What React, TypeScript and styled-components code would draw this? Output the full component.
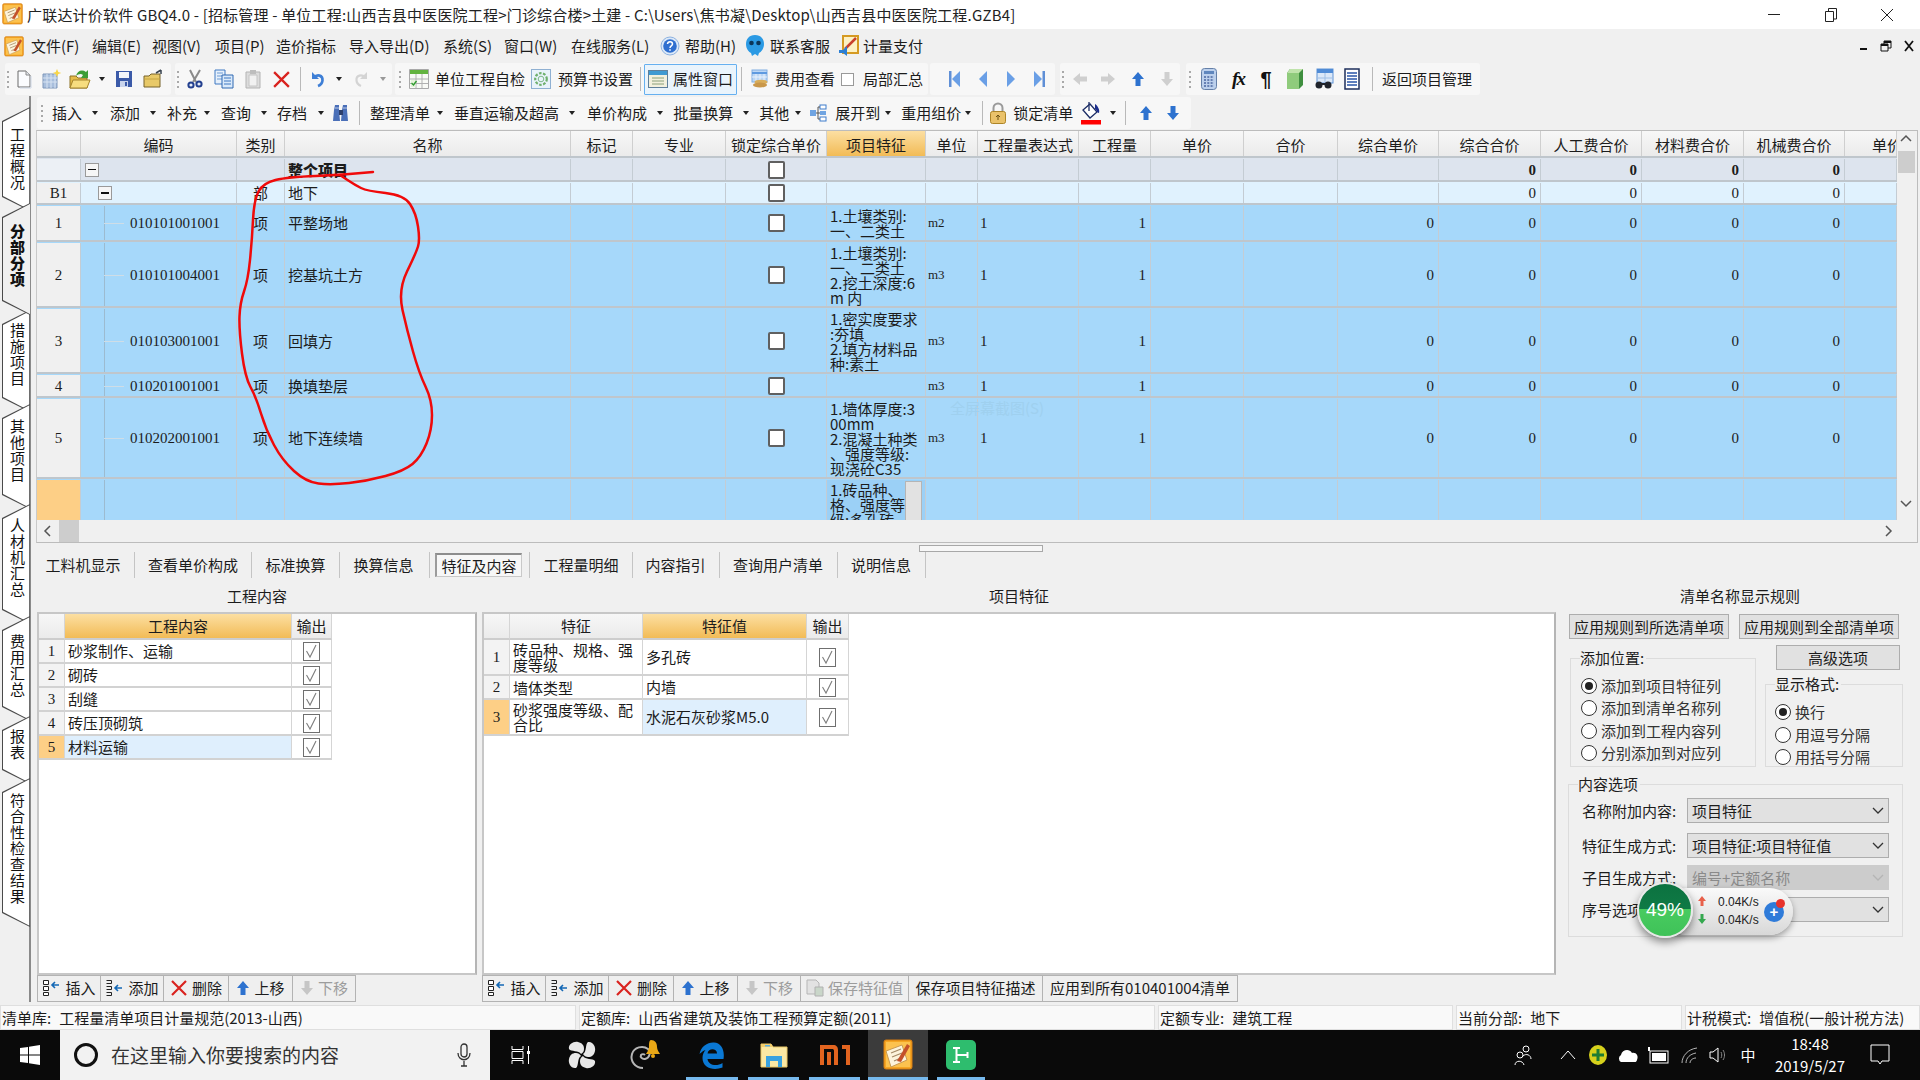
import React from 'react';
import styled, { createGlobalStyle } from 'styled-components';

const CJK = '"Noto Sans CJK SC", "Noto Sans", sans-serif';
const DIGIT = '"Liberation Serif", "Noto Sans CJK SC", serif';

const Global = createGlobalStyle`
  html, body { margin: 0; padding: 0; width: 1920px; height: 1080px; overflow: hidden; background: #f0f0f0; }
  * { box-sizing: border-box; }
`;

const Page = styled.div`
  position: relative; width: 1920px; height: 1080px; overflow: hidden; background: #f0f0f0;
  display: flex; flex-direction: column; font: 15px/18px ${CJK}; color: #1c1c1c;
`;

/* ---------- title + menu ---------- */
const TitleBar = styled.div`
  height: 29px; background: #fff; display: flex; align-items: center; padding-left: 2px; flex: none;
`;
const TitleText = styled.div`margin-left: 4px; white-space: nowrap; flex: 1; color: #222; letter-spacing: 0.19px;`;
const WinButtons = styled.div`display: flex; width: 170px; flex: none; margin-right: 4px;`;
const WinButton = styled.div`width: 56.6px; display: flex; justify-content: center; align-items: center;`;

const MenuBar = styled.div`height: 34px; flex: none; display: flex; align-items: center; padding-left: 4px;`;
const MenuItem = styled.div<{ $w: number; $gap?: number }>`
  width: ${p => p.$w}px; flex: none; white-space: nowrap; display: flex; align-items: center; gap: ${p => p.$gap ?? 0}px;
`;
const MdiButtons = styled.div`margin-left: auto; display: flex; align-items: center; gap: 11px; padding-right: 5px;`;

/* ---------- toolbars ---------- */
const ToolRow = styled.div`height: 33px; flex: none; display: flex; padding-left: 5px;`;
const ToolGroup = styled.div<{ $w: number; $ml?: number }>`
  width: ${p => p.$w}px; margin-left: ${p => p.$ml ?? 0}px; flex: none; height: 32px; background: #f7f7f7; border-radius: 3px;
  display: flex; align-items: center;
`;
const Slot = styled.div<{ $w?: number; $ml?: number; $muted?: boolean }>`
  ${p => (p.$w ? `width:${p.$w}px;` : '')} margin-left: ${p => p.$ml ?? 0}px; flex: none; white-space: nowrap;
  display: flex; justify-content: center; align-items: center; color: ${p => (p.$muted ? '#9a9a9a' : 'inherit')};
`;
const ActiveTool = styled(Slot)`
  height: 31px; border: 1px solid #66b0f0; background: #eaf4fc; gap: 5px; border-radius: 1px;
`;
const Grip = styled.div<{ $w: number }>`
  width: ${p => p.$w}px; flex: none; height: 17px; display: flex; justify-content: center;
  &::before { content: ''; width: 2px; height: 100%; background: repeating-linear-gradient(#a9a9a9 0 2px, transparent 2px 5px); }
`;
const Sep = styled.div<{ $w: number; $ml?: number }>`
  width: ${p => p.$w}px; margin-left: ${p => p.$ml ?? 0}px; flex: none; height: 24px; display: flex; justify-content: center;
  &::before { content: ''; width: 1px; height: 100%; background: #b9b9b9; }
`;
const Caret = styled.div<{ $w?: number; $ml?: number; $muted?: boolean }>`
  ${p => (p.$w ? `width:${p.$w}px;` : 'width:7px;')} margin-left: ${p => p.$ml ?? 0}px; flex: none; display: flex; justify-content: center;
  &::before { content: ''; border-left: 3.5px solid transparent; border-right: 3.5px solid transparent;
    border-top: 4px solid ${p => (p.$muted ? '#999' : '#222')}; }
`;
const MiniCheck = styled.div`width: 13px; height: 13px; border: 1px solid #999; background: #fff;`;
const FxGlyph = styled.span`font: italic 700 19px/20px "Liberation Serif", serif; color: #111; letter-spacing: -2px;`;
const PilcrowGlyph = styled.span`font: 700 20px/20px "Liberation Sans", sans-serif; color: #111;`;

/* ---------- body ---------- */
const Body = styled.div`flex: 1; display: flex; min-height: 0;`;
const SideRail = styled.div`
  width: 36px; flex: none; padding-top: 11px; display: flex; flex-direction: column;
  background: linear-gradient(to right, #f0f0f0 29px, #8a8a8a 29px, #8a8a8a 31px, #f0f0f0 31px);
`;
const SideTab = styled.div<{ $h: number; $mt: number; $pb: number; $active?: boolean }>`
  height: ${p => p.$h}px; margin-top: ${p => p.$mt}px; width: 31px; flex: none; position: relative;
  display: flex; align-items: center; justify-content: center; padding: 0 0 ${p => p.$pb}px 3px;
  clip-path: polygon(2px 14px, 30px 0, 30px 100%, 2px calc(100% - 14px)); background: #4a4a4a;
  z-index: ${p => (p.$active ? 2 : 1)};
  &::before { content: ''; position: absolute; inset: 0; background: ${p => (p.$active ? '#f0f0f0' : '#fff')};
    clip-path: polygon(3px 15px, 29px 1.6px, ${p => (p.$active ? '31px 0, 31px 100%' : '29.2px 1.6px, 29.2px calc(100% - 1.6px)')}, 29px calc(100% - 1.6px), 3px calc(100% - 15px)); }
`;
const SideTabText = styled.span<{ $active?: boolean }>`
  position: relative; writing-mode: vertical-rl; text-orientation: upright; font-size: 15px; line-height: 16px;
  letter-spacing: 1px; font-weight: ${p => (p.$active ? 900 : 400)}; color: #111;
`;

const Content = styled.div`flex: 1; display: flex; flex-direction: column; min-width: 0;`;
const SecondRow = styled.div`height: 34px; flex: none; display: flex; padding-top: 1px;`;
const SecondGroup = styled.div`
  width: 1154px; margin-left: 1px; height: 32px; background: #f7f7f7; border-radius: 3px; display: flex; align-items: center;
`;

const TableFrame = styled.div`
  height: 413px; flex: none; width: 1882px; border: 1px solid #bcbcbc; border-left-color: #c9c9c9; display: flex; flex-wrap: wrap; align-content: flex-start;
`;
const TableBody = styled.div`width: 1860px; height: 389px; overflow: hidden; flex: none;`;
const COLS = '44px 156px 48px 286px 62px 93px 101px 99px 52px 101px 72px 93px 94px 101px 102px 101px 102px 101px 52px';
const GridRow = styled.div<{ $h: number; $bg: string; $head?: boolean }>`
  display: grid; grid-template-columns: ${COLS}; height: ${p => p.$h}px; background: ${p => p.$bg};
  border-bottom: 2px solid #bfc6cc; overflow: hidden; padding-top: ${p => (p.$head ? 0 : 1)}px;
`;
const HeadCell = styled.div<{ $gold?: boolean; $cut?: boolean }>`
  display: flex; align-items: center; justify-content: ${p => (p.$cut ? 'flex-start' : 'center')}; white-space: nowrap; overflow: hidden;
  border-right: 1px solid #cfcfcf; padding: 2px 0 0 ${p => (p.$cut ? 27 : 0)}px;
  background: ${p => (p.$gold ? 'linear-gradient(#fcdfa2, #f2bb56)' : 'linear-gradient(#f7f7f7, #ebebeb)')};
`;
const Cell = styled.div<{ $align?: string; $bold?: boolean; $pad?: number; $digit?: boolean; $bg?: string }>`
  position: relative; display: flex; align-items: center; white-space: nowrap; overflow: hidden;
  border-right: 1px solid #c4ccd3; justify-content: ${p => p.$align ?? 'flex-start'};
  padding: 0 ${p => p.$pad ?? 4}px; font-weight: ${p => (p.$bold ? 900 : 400)};
  ${p => (p.$digit ? `font-family:${DIGIT};` : '')} ${p => (p.$bg ? `background:${p.$bg};` : '')}
`;
const TreeCell = styled(Cell)<{ $line?: boolean; $stub?: boolean }>`
  padding-left: 49px; font-family: ${DIGIT};
  ${p => (p.$line ? `&::before { content:''; position:absolute; left:23px; top:-2px; bottom:-2px; width:1px; background:#9cbbd0; }` : '')}
  ${p => (p.$stub ? `&::after { content:''; position:absolute; left:23px; width:20px; top:50%; height:1px; background:#cfdde6; }` : '')}
`;
const TreeBox = styled.div<{ $ml: number }>`
  width: 14px; height: 14px; margin-left: ${p => p.$ml}px; border: 1px solid #9a9a9a; background: #f6f6f6; flex: none;
  display: flex; align-items: center; justify-content: center;
  &::before { content: ''; width: 8px; height: 1.5px; background: #111; }
`;
const FeatureCell = styled(Cell)<{ $top?: boolean }>`
  white-space: pre-line; line-height: 15px; padding: ${p => (p.$top ? 2 : 0)}px 0 0 3px; align-items: ${p => (p.$top ? 'flex-start' : 'center')};
`;
const SmallUnit = styled.span`font-size: 13px; font-family: ${DIGIT};`;
const CellScroll = styled.div`
  position: absolute; right: 3px; top: 1px; bottom: -10px; width: 17px; background: #e2e2e2; border: 1px solid #b5b5b5;
`;
const Box = styled.div`width: 17px; height: 18px; border: 2px solid #606060; border-radius: 2px; background: #fff; flex: none;`;
const VScroll = styled.div`
  width: 18px; height: 389px; flex: none; background: #f0f0f0; display: flex; flex-direction: column; align-items: center; padding-top: 3px;
`;
const VThumb = styled.div`width: 17px; height: 22px; background: #cdcdcd; margin-top: 8px;`;
const HScroll = styled.div`width: 100%; height: 22px; flex: none; display: flex; align-items: center; padding-left: 6px;`;
const HThumb = styled.div`width: 20px; height: 100%; background: #cdcdcd; margin-left: 7px;`;
const Arrow = styled.div<{ $mt?: number; $ml?: number }>`
  margin-top: ${p => p.$mt ?? 0}px; margin-left: ${p => p.$ml ?? 0}px; display: flex;
`;
const Splitter = styled.div`
  height: 9px; flex: none; display: flex; justify-content: center; padding: 2px 0 0 0; width: 1882px;
  &::before { content: ''; width: 122px; height: 5px; background: #f7f7f7; border: 1px solid #a8a8a8; margin-left: 7px; }
`;
const TabStrip = styled.div`height: 26px; flex: none; display: flex; align-items: center; padding-left: 2px;`;
const BottomTab = styled.div<{ $w: number; $active?: boolean }>`
  width: ${p => p.$w}px; flex: none; height: ${p => (p.$active ? 24 : 26)}px; display: flex; align-items: center; justify-content: center; white-space: nowrap;
  ${p => (p.$active ? 'background:#f7f7f7;border:1px solid #c9c9c9;border-top:2px solid #8d8d8d;border-left:2px solid #9b9b9b;' : '')}
`;
const TabSep = styled.div<{ $w: number }>`
  width: ${p => p.$w}px; flex: none; height: 26px; display: flex; justify-content: center;
  &::before { content: ''; width: 1px; height: 100%; background: #c4c4c4; }
`;

const Lower = styled.div`flex: 1; display: flex; min-height: 0;`;
const Column = styled.div<{ $w: number; $ml?: number }>`
  width: ${p => p.$w}px; margin-left: ${p => p.$ml ?? 0}px; flex: none; display: flex; flex-direction: column;
`;
const SectionLabel = styled.div<{ $shift?: number }>`
  height: 34px; flex: none; display: flex; align-items: center; justify-content: center; padding: 1px ${p => p.$shift ?? 0}px 0 0;
`;
const Panel = styled.div`
  height: 363px; flex: none; background: #fff; border: 2px solid #c7c7c7; border-right-color: #b5b5b5; padding: 0;
`;
const MiniGrid = styled.div<{ $cols: string }>`
  display: grid; grid-template-columns: ${p => p.$cols}; width: max-content;
`;
const MiniHead = styled.div<{ $gold?: boolean }>`
  height: 26px; display: flex; align-items: center; justify-content: center; border-right: 1px solid #d5d5d5; border-bottom: 2px solid #cdcdcd;
  background: ${p => (p.$gold ? 'linear-gradient(#fcdfa2, #f2bb56)' : 'linear-gradient(#f7f7f7, #ebebeb)')};
`;
const MiniCell = styled.div<{ $h: number; $center?: boolean; $bg?: string; $tight?: boolean }>`
  height: ${p => p.$h}px; display: flex; align-items: center; justify-content: ${p => (p.$center ? 'center' : 'flex-start')};
  padding: 0 ${p => (p.$center ? 0 : 3)}px; border-right: 1px solid #d5d5d5; border-bottom: 2px solid #d2d2d2; background: ${p => p.$bg ?? '#fff'};
  line-height: ${p => (p.$tight ? 15 : 18)}px; white-space: pre-line; overflow: hidden;
`;
const IdxCell = styled(MiniCell)`background: ${p => p.$bg ?? '#f3f3f3'}; font-family: ${DIGIT};`;
const BtnBar = styled.div`height: 27px; margin-top: 0; flex: none; display: flex;`;
const BarButton = styled.div<{ $w: number; $muted?: boolean }>`
  width: ${p => p.$w}px; flex: none; display: flex; align-items: center; justify-content: center; gap: 4px; white-space: nowrap; padding-bottom: 2px;
  border: 1px solid #b3b3b3; border-left-width: 0; background: #efefef; color: ${p => (p.$muted ? '#9c9c9c' : 'inherit')};
  &:first-child { border-left-width: 1px; }
`;

const RulePane = styled.div`flex: 1; padding-left: 12px; display: flex; flex-direction: column;`;
const PlainBtn = styled.div<{ $w: number; $mr?: number }>`
  width: ${p => p.$w}px; height: 25px; margin-right: ${p => p.$mr ?? 0}px; flex: none; display: flex; align-items: center; justify-content: center;
  background: #e1e1e1; border: 1px solid #adadad; white-space: nowrap;
`;
const BtnRow = styled.div`display: flex; gap: 10px; margin: 2px 0 0 1px;`;
const TwoCols = styled.div`display: flex; margin-top: 6px; margin-left: 2px;`;
const LeftBlock = styled.div`width: 195px; flex: none; padding-top: 13px;`;
const RightBlock = styled.div`flex: none; display: flex; flex-direction: column; align-items: flex-end; width: 138px;`;
const GroupBox = styled.div<{ $h: number; $w: number; $mt?: number }>`
  position: relative; width: ${p => p.$w}px; height: ${p => p.$h}px; margin-top: ${p => p.$mt ?? 0}px; flex: none; border: 1px solid #dcdcdc;
`;
const Legend = styled.div`
  position: absolute; left: 9px; top: -10px; background: #f0f0f0; padding: 0 2px 0 0; line-height: 18px; white-space: nowrap;
`;
const RadioStack = styled.div<{ $pt: number; $pl: number; $step: number }>`
  padding: ${p => p.$pt}px 0 0 ${p => p.$pl}px; display: flex; flex-direction: column; gap: ${p => p.$step - 18}px;
`;
const RadioRow = styled.div`display: flex; align-items: center; gap: 4px; height: 18px; white-space: nowrap; color: #333;`;
const Radio = styled.div<{ $on?: boolean }>`
  width: 16px; height: 16px; border-radius: 50%; border: 1px solid #333; background: #fff; flex: none;
  display: flex; align-items: center; justify-content: center;
  &::before { content: ''; width: 8px; height: 8px; border-radius: 50%; background: ${p => (p.$on ? '#222' : 'transparent')}; }
`;
const OptionsBox = styled(GroupBox)`margin-left: 0; padding: 13px 0 0 13px; display: flex; flex-direction: column; gap: 0;`;
const FormRow = styled.div<{ $mb?: number }>`display: flex; align-items: center; height: 25px; margin-bottom: ${p => p.$mb ?? 7}px;`;
const FormLabel = styled.div`width: 105px; flex: none; white-space: nowrap;`;
const FakeSelect = styled.div<{ $off?: boolean }>`
  width: 202px; height: 25px; flex: none; background: ${p => (p.$off ? '#cccccc' : '#e1e1e1')}; color: ${p => (p.$off ? '#8a8a8a' : 'inherit')};
  border: 1px solid ${p => (p.$off ? '#cccccc' : '#adadad')}; display: flex; align-items: center; justify-content: space-between; padding: 0 4px 0 4px; white-space: nowrap;
`;

/* ---------- status + taskbar ---------- */
const StatusBar = styled.div`height: 28px; flex: none; padding-top: 3px; display: flex; gap: 3px; padding-left: 0;`;
const StatusCell = styled.div<{ $w: number }>`
  width: ${p => p.$w}px; height: 25px; flex: none; background: #f9f9f9; border: 1px solid #dfdfdf; display: flex; align-items: center; padding-left: 1px; gap: 8px; white-space: nowrap; overflow: hidden;
`;
const Taskbar = styled.div`height: 50px; flex: none; background: #0a0a0a; display: flex; align-items: stretch; color: #fff;`;
const StartBtn = styled.div`width: 60px; flex: none; display: flex; align-items: center; justify-content: center;`;
const SearchBox = styled.div`
  width: 430px; flex: none; background: #f2f2f2; color: #333; display: flex; align-items: center; padding-left: 13px; font-size: 19px;
`;
const SearchText = styled.span`margin-left: 12px; flex: 1; white-space: nowrap;`;
const MicSlot = styled.div`width: 52px; flex: none; display: flex; justify-content: center;`;
const TaskSlot = styled.div<{ $w: number; $ml?: number; $run?: boolean; $active?: boolean }>`
  width: ${p => p.$w}px; margin-left: ${p => p.$ml ?? 0}px; flex: none; display: flex; align-items: center; justify-content: center;
  ${p => (p.$active ? 'background:#3b3b3b;' : '')}
  ${p => (p.$run ? `box-shadow: inset 0 -3px 0 #76b9ed;` : '')}
`;
const Tray = styled.div<{ $w: number; $ml?: number }>`
  width: ${p => p.$w}px; margin-left: ${p => p.$ml ?? 0}px; flex: none; display: flex; align-items: center; justify-content: center;
`;
const Clock = styled.div`
  width: 90px; margin-left: 5px; flex: none; display: flex; flex-direction: column; align-items: center; justify-content: center; font-size: 15px; line-height: 22px; color: #fff;
`;

/* ---------- overlays ---------- */
const RedInk = styled.svg`position: absolute; left: 0; top: 0; pointer-events: none; z-index: 3;`;
const Ghost = styled.div`position: absolute; left: 950px; top: 399px; color: #9fd0ef; z-index: 2; white-space: nowrap;`;
const Meter = styled.div`
  position: absolute; left: 1637px; top: 882px; width: 160px; height: 56px; z-index: 5;
`;
const MeterPill = styled.div`
  position: absolute; left: 26px; top: 6px; width: 130px; height: 47px; border-radius: 24px;
  background: linear-gradient(#fafafa, #d8d8d8); box-shadow: 0 3px 6px rgba(0,0,0,.35);
`;
const MeterBall = styled.div`
  position: absolute; left: 0; top: 0; width: 56px; height: 56px; border-radius: 50%; border: 2px solid #e8e8e8; color: #fff; font: 19px/52px "Liberation Sans", sans-serif;
  text-align: center; background: linear-gradient(#0c7240 0, #0f7a45 49%, #48cb60 49%, #3fc258 100%); box-shadow: 0 4px 8px rgba(0,0,0,.45);
`;
const MeterRate = styled.div<{ $top: number }>`
  position: absolute; left: 81px; top: ${p => p.$top}px; font: 12px/14px "Liberation Sans", sans-serif; color: #222; white-space: nowrap;
`;
const MeterArrow = styled.div<{ $top: number }>`position: absolute; left: 60px; top: ${p => p.$top}px; display: flex;`;
const MeterPlus = styled.div`
  position: absolute; left: 127px; top: 20px; width: 20px; height: 20px; border-radius: 50%; background: #2f7bd9; color: #fff;
  font: 700 15px/19px "Liberation Sans", sans-serif; text-align: center;
`;
const MeterDot = styled.div`position: absolute; left: 139px; top: 17px; width: 9px; height: 9px; border-radius: 50%; background: #e8332c;`;

/* ---------- icons ---------- */
type P = { s?: number };
const Doc = () => <svg width="18" height="20" viewBox="0 0 18 20"><path d="M3 2h8l4 4v12H3z" fill="#fbfcfe" stroke="#6b6b6b" /><path d="M11 2v4h4" fill="#e2e6ec" stroke="#8a8a8a" /><path d="M16 7v12H5" fill="none" stroke="#cfd8e6" /></svg>;
const NewDoc = () => <svg width="22" height="20" viewBox="0 0 22 20"><path d="M2 5h14v14H2z" fill="#a9bfdd" stroke="#7f97ba" /><path d="M6 5v14M10 5v14M14 5v14M2 9h14M2 13h14" stroke="#d7e3f2" /><path d="M16 0l1.300 3 3 1-3 1-1.300 3-1.300-3-3-1 3-1z" fill="#f8d648" /></svg>;
const OpenF = () => <svg width="24" height="20" viewBox="0 0 24 20"><path d="M2 7h6l2 2h9v10H2z" fill="#e6bc48" stroke="#8d7327" /><path d="M2 19l3-8h17l-3 8z" fill="#f7dd7f" stroke="#a5842c" /><path d="M8 7c1-5 6-7 10-4l2-2v8h-7l2-3c-2-2-5-1-7 1z" fill="#3d9e37" /></svg>;
const Save = () => <svg width="18" height="20" viewBox="0 0 18 20"><path d="M1 2h16v16H1z" fill="#3b5aa8" /><path d="M4 3h10v6H4z" fill="#f4f6fb" /><path d="M5 12h8v6H5z" fill="#c9d4ec" /><path d="M10 13h2v4h-2z" fill="#3b5aa8" /></svg>;
const FolderS = () => <svg width="22" height="20" viewBox="0 0 22 20"><path d="M2 7h5l2-2h9v13H2z" fill="#e8c968" stroke="#77632a" /><path d="M2 10h16" stroke="#c5a442" /><path d="M14 4l5-3M19 1v4" fill="none" stroke="#39434f" strokeWidth="1.500" /></svg>;
const Sciss = () => <svg width="18" height="20" viewBox="0 0 18 20"><path d="M4 1l6 12M14 1L7 13" stroke="#8a8a8a" strokeWidth="2" /><circle cx="5" cy="16" r="2.600" fill="#e6ecf7" stroke="#23408f" strokeWidth="2" /><circle cx="13" cy="15" r="2.600" fill="#e6ecf7" stroke="#23408f" strokeWidth="2" /></svg>;
const CopyI = () => <svg width="20" height="20" viewBox="0 0 20 20"><path d="M1 1h10v14H1z" fill="#e6f0fb" stroke="#3e78c2" /><path d="M3 4h6M3 7h6M3 10h6" stroke="#6c9bd4" /><path d="M8 6h11v13H8z" fill="#d9e9fa" stroke="#2f68b2" /><path d="M10 9h7M10 12h7M10 15h7" stroke="#3e78c2" /></svg>;
const PasteI = () => <svg width="18" height="20" viewBox="0 0 18 20"><path d="M2 3h14v16H2z" fill="#dcdcdc" stroke="#b3b3b3" /><path d="M5 6h8v11H5z" fill="#f1f1f1" stroke="#c4c4c4" /><path d="M6 1h6v4H6z" fill="#bdbdbd" /></svg>;
const XI = ({ s = 18 }: P) => <svg width={s} height={s} viewBox="0 0 18 18"><path d="M2 2l14 14M16 2L2 16" stroke="#d9231f" strokeWidth="2.200" /></svg>;
const Undo = () => <svg width="16" height="18" viewBox="0 0 16 18"><path d="M3 2v7h7" fill="#3e7fd6" /><path d="M5 7.500C8 4 14 5 13.500 10.500c-.3 2.500-2 4.500-4.500 5.500" fill="none" stroke="#3e7fd6" strokeWidth="2.600" /></svg>;
const Redo = () => <svg width="16" height="18" viewBox="0 0 16 18"><path d="M13 2v7H6" fill="#d4d4d4" /><path d="M11 7.500C8 4 2 5 2.500 10.500c.3 2.500 2 4.500 4.500 5.500" fill="none" stroke="#d4d4d4" strokeWidth="2.200" /></svg>;
const Sheet = () => <svg width="20" height="20" viewBox="0 0 20 20"><path d="M0.500 0.500h19v19h-19z" fill="#f9faf6" stroke="#a9a9a9" /><rect x="1" y="1" width="18" height="4" fill="#63b33f" /><path d="M7 5v14M13 5v14M1 10h18M1 14.500h18" stroke="#b1b1b1" /><rect x="2" y="11" width="4.500" height="7" fill="#e5f4d9" /><path d="M2.500 14l2 2 3-4" stroke="#2f9a2f" strokeWidth="1.400" fill="none" /></svg>;
const Gear = () => <svg width="20" height="20" viewBox="0 0 20 20"><rect x="0.500" y="0.500" width="19" height="19" fill="#eaf3fb" stroke="#8fb0d2" /><circle cx="10" cy="10" r="5.800" fill="none" stroke="#6fb06d" strokeWidth="2.200" strokeDasharray="2.600 1.500" /><circle cx="10" cy="10" r="2.800" fill="none" stroke="#7db889" /></svg>;
const WinI = () => <svg width="20" height="20" viewBox="0 0 20 20"><rect x="0.500" y="1.500" width="19" height="17" fill="#f3f0dd" stroke="#5f7f9a" /><rect x="1" y="2" width="18" height="4" fill="#3f9ad2" /><path d="M4 9h12M4 12h12M4 15h12" stroke="#8aa07a" /></svg>;
const Money = () => <svg width="18" height="20" viewBox="0 0 18 20"><rect x="1" y="1" width="15" height="12" fill="#bcd7f5" stroke="#80aee2" /><path d="M1 4h15" stroke="#5e9ae0" strokeWidth="2" /><path d="M5 5v8M9 5v8M13 5v8M1 8h15" stroke="#e8f1fb" /><ellipse cx="10" cy="13" rx="6.500" ry="2.300" fill="#d9ad5a" /><ellipse cx="9" cy="16" rx="7" ry="2.400" fill="#c9974a" /></svg>;
const Nav = ({ d }: { d: 'l' | 'r' | 'fl' | 'fr' }) => {
  const col = '#6a9fe6';
  return <svg width="14" height="20" viewBox="0 0 14 20">
    {d === 'l' && <path d="M11 2v16L3 10z" fill={col} />}
    {d === 'r' && <path d="M3 2v16l8-8z" fill={col} />}
    {d === 'fl' && <><path d="M13 2v16L5 10z" fill={col} /><path d="M2 2h2.500v16H2z" fill="#5f8fd6" /></>}
    {d === 'fr' && <><path d="M1 2v16l8-8z" fill={col} /><path d="M9.500 2H12v16H9.500z" fill="#5f8fd6" /></>}
  </svg>;
};
const ArrowH = ({ dir, c }: { dir: 'l' | 'r' | 'u' | 'd'; c: string }) => {
  const r = { u: 0, r: 90, d: 180, l: 270 }[dir];
  return <svg width="14" height="16" viewBox="0 0 14 16"><path d="M7 1l6 7H9.500v7h-5V8H1z" fill={c} transform={`rotate(${r} 7 8)`} /></svg>;
};
const Calc = () => <svg width="16" height="22" viewBox="0 0 16 22"><rect x="0.500" y="0.500" width="15" height="21" rx="3" fill="#bcd0ec" stroke="#6580a8" /><rect x="3" y="3" width="10" height="3" fill="#5f86bd" /><path d="M3 9h10M3 12h10M3 15h10M3 18h10" stroke="#6680b3" strokeDasharray="2 1.300" strokeWidth="2" /></svg>;
const GreenBox = () => <svg width="18" height="22" viewBox="0 0 18 22"><path d="M4 1h13v16l-4 4H1V5z" fill="#3f8f3f" /><path d="M1 5h12v16H1z" fill="#8fcb7c" /><path d="M4 1h13l-4 4H1z" fill="#bfe3ab" /></svg>;
const ReportI = () => <svg width="22" height="22" viewBox="0 0 22 22"><rect x="4" y="1" width="16" height="14" fill="#dbe8f8" stroke="#5f93d6" /><rect x="4" y="1" width="16" height="4" fill="#4f8bd6" /><path d="M12 5v10M4 10h16" stroke="#9ebee5" /><circle cx="6" cy="17" r="3.500" fill="#20242c" /><circle cx="15" cy="17" r="3.500" fill="#20242c" /><path d="M8 16h5" stroke="#20242c" strokeWidth="2" /></svg>;
const Table3 = () => <svg width="16" height="22" viewBox="0 0 16 22"><rect x="1" y="1" width="14" height="20" fill="#fff" stroke="#1e2f5c" strokeWidth="1.500" /><path d="M3 5h10M3 8h10M3 11h10M3 14h10M3 17h10" stroke="#2a56a8" strokeWidth="1.500" /></svg>;
const Binos = () => <svg width="20" height="20" viewBox="0 0 20 20"><path d="M4 2h4v5l1 11H2l1-11zM12 2h4v5l1 11h-7l1-11z" fill="#4a6fb8" /><rect x="8" y="7" width="4" height="5" fill="#2d3f6c" /><path d="M4 5h4M12 5h4" stroke="#b9c9e6" /></svg>;
const Tree = () => <svg width="18" height="18" viewBox="0 0 18 18"><rect x="1" y="6" width="6" height="6" fill="#6fa4e2" /><rect x="11" y="1" width="6" height="4" fill="#fff" stroke="#3f7ccb" /><rect x="11" y="7" width="6" height="4" fill="#6fa4e2" /><rect x="11" y="13" width="6" height="4" fill="#fff" stroke="#3f7ccb" /><path d="M7 9h2M9 3v12M9 3h2M9 9h2M9 15h2" stroke="#555" fill="none" /></svg>;
const Lock = () => <svg width="18" height="22" viewBox="0 0 18 22"><path d="M4.500 10V6a4.500 4.500 0 0 1 9 0v4" fill="none" stroke="#9a9a9a" strokeWidth="2" /><rect x="1.500" y="9.500" width="15" height="12" rx="2" fill="#eac26a" stroke="#ad8527" /><path d="M9 13v5M7 15l2-2 2 2" stroke="#6d5213" fill="none" /></svg>;
const PaintI = () => <svg width="22" height="24" viewBox="0 0 22 24"><path d="M3 9l7-6 7 8-7 6z" fill="#fff" stroke="#1c2d66" strokeWidth="1.300" /><path d="M9 1v9" stroke="#1c2d66" strokeWidth="1.300" /><path d="M15 3c3 2 5 6 4 9-2 0-2-3-4-4z" fill="#1b2d8c" /><rect x="1" y="19" width="20" height="4.500" fill="#f00" /></svg>;
const Ins = () => <svg width="19" height="18" viewBox="0 0 19 18"><path d="M1.500 1.500h5v4h-5zM1.500 7.500h5v4h-5zM1.500 13.500h5v3h-5z" fill="#fff" stroke="#222" /><path d="M17 6H10m3-3L10 6l3 3" fill="none" stroke="#1468b5" strokeWidth="1.600" /></svg>;
const Add = () => <svg width="19" height="18" viewBox="0 0 19 18"><path d="M1.500 1.500h5v3h-5M1.500 7.500h5v3h-5M1.500 13.500h5v3h-5" fill="none" stroke="#222" /><path d="M17 9h-7m3-3-3 3 3 3" fill="none" stroke="#1468b5" strokeWidth="1.600" /></svg>;
const SaveGray = () => <svg width="18" height="18" viewBox="0 0 18 18"><path d="M1 1h9l3 3v11H1z" fill="#e2e2e2" stroke="#b5b5b5" /><path d="M9 8h8v9H9z" fill="#c9d6c9" stroke="#b0b0b0" /></svg>;
const Check = () => <svg width="17" height="19" viewBox="0 0 17 19"><rect x="0.500" y="0.500" width="16" height="18" fill="#fff" stroke="#6f6f6f" /><path d="M3.500 9l3.500 6 6-12" fill="none" stroke="#7d7d7d" strokeWidth="1.100" /></svg>;
const Chevron = ({ c = '#333' }: { c?: string }) => <svg width="12" height="8" viewBox="0 0 12 8"><path d="M1 1l5 5 5-5" fill="none" stroke={c} strokeWidth="1.300" /></svg>;
const Notes = ({ s = 30 }: P) => <svg width={s} height={s * 1.050} viewBox="0 0 30 31.500"><rect x="1" y="1" width="28" height="29" rx="2" fill="#f5a623" stroke="#d47b12" /><rect x="3" y="3" width="24" height="25" fill="#fcc24f" /><path d="M3 12l16-6 5 15-16 7z" fill="#fdf4dc" stroke="#c99a52" /><path d="M8 14l10-4M9 18l10-4M11 22l9-4" stroke="#a48a66" strokeWidth="1.200" /><path d="M14 22l10-17 3 2-9 16z" fill="#c4512a" /></svg>;
const HelpI = () => <svg width="20" height="20" viewBox="0 0 20 20"><circle cx="10" cy="10" r="9" fill="#dce9f8" stroke="#8eb2e0" /><circle cx="10" cy="10" r="6.800" fill="#2f6fd0" /><path d="M7.500 8c.2-3 5-3 5 0 0 2-2.500 1.800-2.500 4M10 13.200v1.600" stroke="#fff" strokeWidth="1.500" fill="none" /></svg>;
const Penguin = () => <svg width="20" height="22" viewBox="0 0 20 22"><path d="M10 0c6 0 9 4 9 9s-3 8-5 9l-1 3-3-2-3 2-1-3c-2-1-5-4-5-9s3-9 9-9z" fill="#2b9ae4" /><circle cx="6.500" cy="8" r="2.300" fill="#0b3558" /><circle cx="13.500" cy="8" r="2.300" fill="#0b3558" /></svg>;
const Pay = () => <svg width="20" height="22" viewBox="0 0 20 22"><rect x="4" y="1" width="15" height="17" fill="#fdf1c4" stroke="#d59a22" strokeWidth="2" /><path d="M6 14L17 3" stroke="#c9412f" strokeWidth="2.500" /><path d="M0 15h4l4-4v10l-4-3H0z" fill="#2c7fd4" /></svg>;
const WinLogo = () => <svg width="20" height="20" viewBox="0 0 20 20"><path d="M0 3l8-1v7.500H0zM9 1.800L20 0v9.500H9zM0 10.500h8V18l-8-1zM9 10.500h11V20L9 18.200z" fill="#fff" /></svg>;
const Ring = () => <svg width="26" height="26" viewBox="0 0 26 26"><circle cx="13" cy="13" r="10.500" fill="none" stroke="#111" strokeWidth="3" /></svg>;
const Mic = () => <svg width="14" height="24" viewBox="0 0 14 24"><rect x="4" y="1" width="6" height="13" rx="3" fill="none" stroke="#333" strokeWidth="1.300" /><path d="M1 10c0 9 12 9 12 0M7 18v5M4 23h6" fill="none" stroke="#333" strokeWidth="1.300" /></svg>;
const TaskView = () => <svg width="22" height="20" viewBox="0 0 22 20"><path d="M3 6.500h11v7H3zM3 1v3.500h11V1M3 19v-3.500h11V19M19.500 1v5M19.500 9v10" fill="none" stroke="#fff" /><rect x="18" y="6" width="3" height="3" fill="#fff" /></svg>;
const Swirl = () => <svg width="28" height="28" viewBox="0 0 28 28"><path d="M13 13C11 9 3 11 1 8 0 3 6 0 10 1c4 1 6 3 6 7 0 2-1 4-3 5z" fill="#e8e8e8" /><path d="M15 13c4-2 2-10 5-12 5-1 8 5 7 9-1 4-3 6-7 6-2 0-4-1-5-3z" fill="#e8e8e8" /><path d="M15 15c2 4 10 2 12 5 1 5-5 8-9 7-4-1-6-3-6-7 0-2 1-4 3-5z" fill="#e8e8e8" /><path d="M13 15c-4 2-2 10-5 12-5 1-8-5-7-9 1-4 3-6 7-6 2 0 4 1 5 3z" fill="#e8e8e8" /></svg>;
const Spiral = () => <svg width="36" height="34" viewBox="0 0 36 34"><path d="M16 30C8 30 3 23 5 16 7 9 16 7 21 11c3 3 2 9-3 10-3 .5-5-2-4-4 1-1 3-1 4 0" fill="none" stroke="#b5b5b5" strokeWidth="2" /><path d="M24 2c4 0 6 3 6 7 0 3 2 5 3 7H19c1-2 3-4 3-7 0-3 0-7 2-7z" fill="#e9a716" /><circle cx="26" cy="18" r="2" fill="#e9a716" /></svg>;
const Edge = () => <svg width="26" height="28" viewBox="0 0 26 28"><path d="M24.500 18H8.500c.5 6 9 8 15 4v4.500c-9 3.500-20 .5-20-9.500 0-3 1-6 3-8C3 10 1 13 .5 13 2 5 9 1 15 1.500c7 .5 11 7 9.500 16.500zM8.500 12.500H18c.2-5-8.500-6-9.500 0z" fill="#0a78d4" /></svg>;
const Folder = () => <svg width="28" height="26" viewBox="0 0 28 26"><path d="M1 2h10l2 3h14v20H1z" fill="#fbe8a4" stroke="#e9c766" /><path d="M1 2h10l2 3H1z" fill="#f1cd6c" /><rect x="5" y="3" width="5" height="1.500" fill="#5cb0e6" /><path d="M6 25V14h16v11h-4v-6h-8v6z" fill="#39a2e0" /></svg>;
const Mi = () => <svg width="30" height="20" viewBox="0 0 30 20"><path d="M0 0h13c3.500 0 5 2 5 5v15h-4V6c0-1.500-.7-2-2-2H4v16H0zM7 7h4v13H7zM22 0h8v20h-4V4h-4z" fill="#e2641f" /></svg>;
const HApp = () => <svg width="30" height="30" viewBox="0 0 30 30"><rect width="30" height="30" rx="5" fill="#2ebd6e" /><path d="M7 8h7M10.500 8v14M7 22h7M10.500 15h11M21.500 12v6" fill="none" stroke="#fff" strokeWidth="2" /></svg>;
const Person = () => <svg width="20" height="22" viewBox="0 0 20 22"><circle cx="7" cy="11" r="3" fill="none" stroke="#fff" /><path d="M2 21c0-5 8-5 9 0" fill="none" stroke="#fff" /><circle cx="13" cy="5" r="3" fill="none" stroke="#fff" /><path d="M10 12c3-3 8-1 8 3" fill="none" stroke="#fff" /></svg>;
const UpCar = () => <svg width="16" height="10" viewBox="0 0 16 10"><path d="M1 9l7-8 7 8" fill="none" stroke="#fff" /></svg>;
const Plus360 = () => <svg width="20" height="22" viewBox="0 0 20 22"><ellipse cx="10" cy="11" rx="9" ry="10" fill="#d6d11c" /><path d="M10 5v12M4 11h12" stroke="#1d7d33" strokeWidth="3" /></svg>;
const Cloud = () => <svg width="22" height="16" viewBox="0 0 22 16"><path d="M4 15a4 4 0 0 1 0-7c1-5 8-7 11-2 4-1 7 3 5 7-.5 1.500-1 2-2 2z" fill="#fff" /></svg>;
const Batt = () => <svg width="22" height="18" viewBox="0 0 22 18"><rect x="3" y="5" width="18" height="12" fill="none" stroke="#fff" /><rect x="5" y="7" width="14" height="8" fill="#fff" /><path d="M2 1v4" stroke="#fff" strokeWidth="2" /></svg>;
const Wifi = () => <svg width="18" height="18" viewBox="0 0 18 18"><path d="M2 17C2 10 8 3 17 2M6 17c0-5 4-9 10-10M10 17c0-3 3-5 6-5" fill="none" stroke="#b5b5b5" /></svg>;
const Vol = () => <svg width="18" height="18" viewBox="0 0 18 18"><path d="M2 6h3l5-4v14l-5-4H2z" fill="none" stroke="#fff" /><path d="M13 6c1 2 1 4 0 6M15 4c2 3 2 7 0 10" fill="none" stroke="#8a8a8a" /></svg>;
const Bubble = () => <svg width="22" height="24" viewBox="0 0 22 24"><path d="M2 2h18v16h-7l-2 3-2-3H2z" fill="none" stroke="#fff" /></svg>;
const UpSmall = () => <svg width="10" height="12" viewBox="0 0 10 12"><path d="M5 1l4 5H6.500v5h-3V6H1z" fill="#e8604a" /></svg>;
const DownSmall = () => <svg width="10" height="12" viewBox="0 0 10 12"><path d="M5 11L1 6h2.500V1h3v5H9z" fill="#35a84f" /></svg>;

/* ---------- data ---------- */
const HEAD = ['', '编码', '类别', '名称', '标记', '专业', '锁定综合单价', '项目特征', '单位', '工程量表达式', '工程量', '单价', '合价', '综合单价', '综合合价', '人工费合价', '材料费合价', '机械费合价', '单价'];

type Row = { h: number; bg: string; idx: string; idxBg: string; code: string; kind: string; name: string; feat: string; unit: string; qty: boolean; mode: 'root' | 'part' | 'item' | 'tail' };
const SEL = '#a6d8fa';
const ROWS: Row[] = [
  { h: 24, bg: '#dde4ee', idx: '', idxBg: '#ecf0f5', code: '', kind: '', name: '整个项目', feat: '', unit: '', qty: false, mode: 'root' },
  { h: 23, bg: '#e0f2fe', idx: 'B1', idxBg: '#f0f0f0', code: '', kind: '部', name: '地下', feat: '', unit: '', qty: false, mode: 'part' },
  { h: 37, bg: SEL, idx: '1', idxBg: '#f0f0f0', code: '010101001001', kind: '项', name: '平整场地', feat: '1.土壤类别:\n一、二类土', unit: 'm2', qty: true, mode: 'item' },
  { h: 66, bg: SEL, idx: '2', idxBg: '#f0f0f0', code: '010101004001', kind: '项', name: '挖基坑土方', feat: '1.土壤类别:\n一、二类土\n2.挖土深度:6\nm 内', unit: 'm3', qty: true, mode: 'item' },
  { h: 66, bg: SEL, idx: '3', idxBg: '#f0f0f0', code: '010103001001', kind: '项', name: '回填方', feat: '1.密实度要求\n:夯填\n2.填方材料品\n种:素土', unit: 'm3', qty: true, mode: 'item' },
  { h: 24, bg: SEL, idx: '4', idxBg: '#f0f0f0', code: '010201001001', kind: '项', name: '换填垫层', feat: '', unit: 'm3', qty: true, mode: 'item' },
  { h: 81, bg: SEL, idx: '5', idxBg: '#f0f0f0', code: '010202001001', kind: '项', name: '地下连续墙', feat: '1.墙体厚度:3\n00mm\n2.混凝土种类\n、强度等级:\n现浇砼C35', unit: 'm3', qty: true, mode: 'item' },
  { h: 60, bg: SEL, idx: '', idxBg: '#fdcf86', code: '', kind: '', name: '', feat: '1.砖品种、\n格、强度等\n级:多孔砖', unit: '', qty: false, mode: 'tail' },
];

const SIDE = [
  { t: '工程概况', h: 104, m: 0, pb: 0 }, { t: '分部分项', h: 112, m: -8, pb: 6, a: true }, { t: '措施项目', h: 102, m: -5, pb: 12 }, { t: '其他项目', h: 105, m: -8, pb: 11 },
  { t: '人材机汇总', h: 120, m: -5, pb: 12 }, { t: '费用汇总', h: 105, m: -8, pb: 6 }, { t: '报表', h: 68, m: -5, pb: 11 }, { t: '符合性检查结果', h: 149, m: -6, pb: 8 },
];
const INK: [number, number][] = [[373, 172], [343, 175], [288, 177], [263, 183], [254, 200], [252, 240], [248, 280], [240, 303], [239, 330], [245, 377], [256, 397], [266, 430], [282, 460], [306, 482], [331, 485], [367, 481], [404, 471], [421, 457], [432, 430], [432, 400], [419, 373], [407, 330], [398, 290], [416, 253], [420, 240], [416, 213], [404, 195], [367, 191], [355, 185], [340, 175]];

function smoothPath(pts: [number, number][]) {
  let d = `M${pts[0][0]} ${pts[0][1]}`;
  for (let i = 1; i < pts.length - 1; i++) {
    const mx = (pts[i][0] + pts[i + 1][0]) / 2;
    const my = (pts[i][1] + pts[i + 1][1]) / 2;
    d += ` Q${pts[i][0]} ${pts[i][1]} ${mx} ${my}`;
  }
  const last = pts[pts.length - 1];
  return `${d} L${last[0]} ${last[1]}`;
}

function MainRow({ r }: { r: Row }) {
  const money = r.mode === 'root' || r.mode === 'part' || r.mode === 'item';
  const bold = r.mode === 'root';
  return (
    <GridRow $h={r.h} $bg={r.bg}>
      <Cell $align="center" $digit $bg={r.idxBg} $pad={0}>{r.idx}</Cell>
      <TreeCell $line={r.mode === 'item' || r.mode === 'tail'} $stub={r.mode === 'item'} $pad={0}>
        {r.mode === 'root' && <TreeBox $ml={-45} />}
        {r.mode === 'part' && <TreeBox $ml={-32} />}
        {r.code}
      </TreeCell>
      <Cell $align="center" $pad={0}>{r.kind}</Cell>
      <Cell $bold={bold} $pad={3}>{r.name}</Cell>
      <Cell />
      <Cell />
      <Cell $align="center">{r.mode !== 'tail' && <Box />}</Cell>
      <FeatureCell $bg={r.mode === 'tail' ? '#9bd0f6' : undefined} $top={r.mode === 'tail'}>
        {r.feat}
        {r.mode === 'tail' && <CellScroll />}
      </FeatureCell>
      <Cell $pad={2}><SmallUnit>{r.unit}</SmallUnit></Cell>
      <Cell $digit $pad={2}>{r.qty ? '1' : ''}</Cell>
      <Cell $digit $align="flex-end">{r.qty ? '1' : ''}</Cell>
      <Cell />
      <Cell />
      <Cell $digit $align="flex-end">{r.qty ? '0' : ''}</Cell>
      {[0, 1, 2, 3].map(i => <Cell key={i} $digit $bold={bold} $align="flex-end">{money ? '0' : ''}</Cell>)}
      <Cell />
    </GridRow>
  );
}

const LEFT_ROWS = ['砂浆制作、运输', '砌砖', '刮缝', '砖压顶砌筑', '材料运输'];
const FEAT_ROWS = [
  { n: '砖品种、规格、强\n度等级', v: '多孔砖', h: 36 },
  { n: '墙体类型', v: '内墙', h: 24 },
  { n: '砂浆强度等级、配\n合比', v: '水泥石灰砂浆M5.0', h: 36, active: true },
];

function LeftButtons() {
  return (
    <>
      <BarButton $w={64}><Ins />插入</BarButton>
      <BarButton $w={63}><Add />添加</BarButton>
      <BarButton $w={65}><XI />删除</BarButton>
      <BarButton $w={64}><ArrowH dir="u" c="#2d72cf" />上移</BarButton>
      <BarButton $w={63} $muted><ArrowH dir="d" c="#c6c6c6" />下移</BarButton>
    </>
  );
}

export default function App() {
  return (
    <Page>
      <Global />
      <TitleBar>
        <Notes s={21} />
        <TitleText>广联达计价软件 GBQ4.0 - [招标管理 - 单位工程:山西吉县中医医院工程&gt;门诊综合楼&gt;土建 - C:\Users\焦书凝\Desktop\山西吉县中医医院工程.GZB4]</TitleText>
        <WinButtons>
          <WinButton><svg width="12" height="2"><rect width="12" height="1" fill="#222" /></svg></WinButton>
          <WinButton><svg width="12" height="14" viewBox="0 0 12 14"><path d="M.5 3.500h8v10h-8zM3.500 3V.5h8V11H9" fill="none" stroke="#222" /></svg></WinButton>
          <WinButton><svg width="14" height="14" viewBox="0 0 14 14"><path d="M1 1l12 12M13 1L1 13" stroke="#222" /></svg></WinButton>
        </WinButtons>
      </TitleBar>

      <MenuBar>
        <MenuItem $w={27}><Notes s={20} /></MenuItem>
        <MenuItem $w={61}>文件(F)</MenuItem>
        <MenuItem $w={60}>编辑(E)</MenuItem>
        <MenuItem $w={63}>视图(V)</MenuItem>
        <MenuItem $w={61}>项目(P)</MenuItem>
        <MenuItem $w={73}>造价指标</MenuItem>
        <MenuItem $w={94}>导入导出(D)</MenuItem>
        <MenuItem $w={61}>系统(S)</MenuItem>
        <MenuItem $w={67}>窗口(W)</MenuItem>
        <MenuItem $w={89}>在线服务(L)</MenuItem>
        <MenuItem $w={85} $gap={5}><HelpI />帮助(H)</MenuItem>
        <MenuItem $w={94} $gap={5}><Penguin />联系客服</MenuItem>
        <MenuItem $w={90} $gap={4}><Pay />计量支付</MenuItem>
        <MdiButtons>
          <svg width="10" height="10" viewBox="0 0 10 10"><rect x="1" y="7" width="7" height="2" fill="#111" /></svg>
          <svg width="12" height="12" viewBox="0 0 12 12"><path d="M1 4h7v7H1zM4 4V1h7v7H8" fill="none" stroke="#111" /><rect x="1" y="4" width="7" height="2" fill="#111" /><rect x="4" y="1" width="7" height="2" fill="#111" /></svg>
          <svg width="12" height="12" viewBox="0 0 12 12"><path d="M2 1l8 10M10 1L2 11" stroke="#111" strokeWidth="1.800" /></svg>
        </MdiButtons>
      </MenuBar>

      <ToolRow>
        <ToolGroup $w={166}>
          <Grip $w={6} /><Slot $w={26}><Doc /></Slot><Slot $w={29}><NewDoc /></Slot><Slot $w={28}><OpenF /></Slot><Caret $w={16} />
          <Slot $w={28}><Save /></Slot><Slot $w={30}><FolderS /></Slot>
        </ToolGroup>
        <ToolGroup $w={217} $ml={4}>
          <Grip $w={6} /><Slot $w={28}><Sciss /></Slot><Slot $w={29}><CopyI /></Slot><Slot $w={29}><PasteI /></Slot><Slot $w={28}><XI s={19} /></Slot>
          <Sep $w={10} /><Slot $w={24}><Undo /></Slot><Caret $w={20} /><Slot $w={26}><Redo /></Slot><Caret $w={16} $muted />
        </ToolGroup>
        <ToolGroup $w={533} $ml={3}>
          <Grip $w={10} /><Slot $w={28}><Sheet /></Slot><Slot $w={94}>单位工程自检</Slot><Slot $w={28}><Gear /></Slot><Slot $w={81}>预算书设置</Slot>
          <Sep $w={8} /><ActiveTool $w={93}><WinI />属性窗口</ActiveTool><Sep $w={8} /><Slot $w={29}><Money /></Slot><Slot $w={62}>费用查看</Slot>
          <Slot $w={22}><MiniCheck /></Slot><Slot $w={70}>局部汇总</Slot>
        </ToolGroup>
        <ToolGroup $w={125} $ml={2}>
          <Slot $w={9} /><Slot $w={29}><Nav d="fl" /></Slot><Slot $w={29}><Nav d="l" /></Slot><Slot $w={28}><Nav d="r" /></Slot><Slot $w={29}><Nav d="fr" /></Slot>
        </ToolGroup>
        <ToolGroup $w={120} $ml={5}>
          <Grip $w={6} /><Slot $w={28}><ArrowH dir="l" c="#cfcfcf" /></Slot><Slot $w={28}><ArrowH dir="r" c="#cfcfcf" /></Slot>
          <Slot $w={31}><ArrowH dir="u" c="#2d72cf" /></Slot><Slot $w={27}><ArrowH dir="d" c="#cfcfcf" /></Slot>
        </ToolGroup>
        <ToolGroup $w={294} $ml={6}>
          <Grip $w={8} /><Slot $w={30}><Calc /></Slot><Slot $w={28}><FxGlyph>fx</FxGlyph></Slot><Slot $w={28}><PilcrowGlyph>¶</PilcrowGlyph></Slot><Slot $w={30}><GreenBox /></Slot>
          <Slot $w={28}><ReportI /></Slot><Slot $w={28}><Table3 /></Slot><Sep $w={12} /><Slot $w={98}>返回项目管理</Slot>
        </ToolGroup>
      </ToolRow>

      <Body>
        <SideRail>
          {SIDE.map(s => (
            <SideTab key={s.t} $h={s.h} $mt={s.m} $pb={s.pb} $active={s.a}>
              <SideTabText $active={s.a}>{s.t}</SideTabText>
            </SideTab>
          ))}
        </SideRail>

        <Content>
          <SecondRow>
            <SecondGroup>
              <Grip $w={10} />
              <Slot $ml={5}>插入</Slot><Caret $ml={9} />
              <Slot $ml={12}>添加</Slot><Caret $ml={9} />
              <Slot $ml={11}>补充</Slot><Caret $ml={6} />
              <Slot $ml={11}>查询</Slot><Caret $ml={9} />
              <Slot $ml={10}>存档</Slot><Caret $ml={10} />
              <Slot $ml={7}><Binos /></Slot><Sep $w={1} $ml={8} />
              <Slot $ml={10}>整理清单</Slot><Caret $ml={6} />
              <Slot $ml={11}>垂直运输及超高</Slot><Caret $ml={9} />
              <Slot $ml={12}>单价构成</Slot><Caret $ml={9} />
              <Slot $ml={10}>批量换算</Slot><Caret $ml={9} />
              <Slot $ml={10}>其他</Slot><Caret $ml={5} />
              <Slot $ml={8}><Tree /></Slot>
              <Slot $ml={8}>展开到</Slot><Caret $ml={4} />
              <Slot $ml={10}>重用组价</Slot><Caret $ml={3} />
              <Sep $w={1} $ml={11} /><Slot $ml={6}><Lock /></Slot>
              <Slot $ml={6}>锁定清单</Slot><Slot $ml={7}><PaintI /></Slot><Caret $ml={7} /><Sep $w={1} $ml={9} />
              <Slot $ml={13}><ArrowH dir="u" c="#2d72cf" /></Slot><Slot $ml={13}><ArrowH dir="d" c="#2d72cf" /></Slot>
            </SecondGroup>
          </SecondRow>

          <TableFrame>
            <TableBody>
              <GridRow $h={27} $bg="#f2f2f2" $head>
                {HEAD.map((h, i) => <HeadCell key={i} $gold={h === '项目特征'} $cut={i === HEAD.length - 1}>{h}</HeadCell>)}
              </GridRow>
              {ROWS.map((r, i) => <MainRow key={i} r={r} />)}
            </TableBody>
            <VScroll>
              <Arrow><svg width="12" height="9" viewBox="0 0 12 9"><path d="M1 7l5-5 5 5" fill="none" stroke="#555" strokeWidth="1.500" /></svg></Arrow>
              <VThumb />
              <Arrow $mt={326}><svg width="12" height="9" viewBox="0 0 12 9"><path d="M1 2l5 5 5-5" fill="none" stroke="#555" strokeWidth="1.500" /></svg></Arrow>
            </VScroll>
            <HScroll>
              <Arrow><svg width="9" height="12" viewBox="0 0 9 12"><path d="M7 1L2 6l5 5" fill="none" stroke="#555" strokeWidth="1.500" /></svg></Arrow>
              <HThumb />
              <Arrow $ml={1805}><svg width="9" height="12" viewBox="0 0 9 12"><path d="M2 1l5 5-5 5" fill="none" stroke="#555" strokeWidth="1.500" /></svg></Arrow>
            </HScroll>
          </TableFrame>

          <Splitter />

          <TabStrip>
            <BottomTab $w={90}>工料机显示</BottomTab><TabSep $w={13} />
            <BottomTab $w={104}>查看单价构成</BottomTab><TabSep $w={12} />
            <BottomTab $w={77}>标准换算</BottomTab><TabSep $w={10} />
            <BottomTab $w={79}>换算信息</BottomTab><TabSep $w={12} />
            <BottomTab $w={87} $active>特征及内容</BottomTab><TabSep $w={14} />
            <BottomTab $w={90}>工程量明细</BottomTab><TabSep $w={12} />
            <BottomTab $w={75}>内容指引</BottomTab><TabSep $w={12} />
            <BottomTab $w={106}>查询用户清单</BottomTab><TabSep $w={12} />
            <BottomTab $w={76}>说明信息</BottomTab><TabSep $w={12} />
          </TabStrip>

          <Lower>
            <Column $w={440} $ml={1}>
              <SectionLabel>工程内容</SectionLabel>
              <Panel>
                <MiniGrid $cols="26px 227px 40px">
                  <MiniHead /><MiniHead $gold>工程内容</MiniHead><MiniHead>输出</MiniHead>
                  {LEFT_ROWS.map((t, i) => {
                    const on = i === 4;
                    return (
                      <React.Fragment key={t}>
                        <IdxCell $h={24} $center $bg={on ? '#fdcf86' : undefined}>{i + 1}</IdxCell>
                        <MiniCell $h={24} $bg={on ? '#dfeffd' : undefined}>{t}</MiniCell>
                        <MiniCell $h={24} $center><Check /></MiniCell>
                      </React.Fragment>
                    );
                  })}
                </MiniGrid>
              </Panel>
              <BtnBar><LeftButtons /></BtnBar>
            </Column>

            <Column $w={1074} $ml={5}>
              <SectionLabel>项目特征</SectionLabel>
              <Panel>
                <MiniGrid $cols="26px 133px 164px 42px">
                  <MiniHead /><MiniHead>特征</MiniHead><MiniHead $gold>特征值</MiniHead><MiniHead>输出</MiniHead>
                  {FEAT_ROWS.map((r, i) => (
                    <React.Fragment key={r.n}>
                      <IdxCell $h={r.h} $center $bg={r.active ? '#fdcf86' : undefined}>{i + 1}</IdxCell>
                      <MiniCell $h={r.h} $tight>{r.n}</MiniCell>
                      <MiniCell $h={r.h} $bg={r.active ? '#dfeffd' : undefined}>{r.v}</MiniCell>
                      <MiniCell $h={r.h} $center><Check /></MiniCell>
                    </React.Fragment>
                  ))}
                </MiniGrid>
              </Panel>
              <BtnBar>
                <LeftButtons />
                <BarButton $w={108} $muted><SaveGray />保存特征值</BarButton>
                <BarButton $w={134}>保存项目特征描述</BarButton>
                <BarButton $w={195}>应用到所有010401004清单</BarButton>
              </BtnBar>
            </Column>

            <RulePane>
              <SectionLabel $shift={8}>清单名称显示规则</SectionLabel>
              <BtnRow>
                <PlainBtn $w={160}>应用规则到所选清单项</PlainBtn>
                <PlainBtn $w={160}>应用规则到全部清单项</PlainBtn>
              </BtnRow>
              <TwoCols>
                <LeftBlock>
                  <GroupBox $w={186} $h={109}>
                    <Legend>添加位置:</Legend>
                    <RadioStack $pt={18} $pl={10} $step={22.4}>
                      <RadioRow><Radio $on />添加到项目特征列</RadioRow>
                      <RadioRow><Radio />添加到清单名称列</RadioRow>
                      <RadioRow><Radio />添加到工程内容列</RadioRow>
                      <RadioRow><Radio />分别添加到对应列</RadioRow>
                    </RadioStack>
                  </GroupBox>
                </LeftBlock>
                <RightBlock>
                  <PlainBtn $w={124} $mr={3}>高级选项</PlainBtn>
                  <GroupBox $w={138} $h={83} $mt={14}>
                    <Legend>显示格式:</Legend>
                    <RadioStack $pt={18} $pl={9} $step={22.5}>
                      <RadioRow><Radio $on />换行</RadioRow>
                      <RadioRow><Radio />用逗号分隔</RadioRow>
                      <RadioRow><Radio />用括号分隔</RadioRow>
                    </RadioStack>
                  </GroupBox>
                </RightBlock>
              </TwoCols>
              <OptionsBox $w={335} $h={153} $mt={17}>
                <Legend>内容选项</Legend>
                <FormRow $mb={10}><FormLabel>名称附加内容:</FormLabel><FakeSelect>项目特征<Chevron /></FakeSelect></FormRow>
                <FormRow $mb={7}><FormLabel>特征生成方式:</FormLabel><FakeSelect>项目特征:项目特征值<Chevron /></FakeSelect></FormRow>
                <FormRow $mb={7}><FormLabel>子目生成方式:</FormLabel><FakeSelect $off>编号+定额名称<Chevron c="#b5b5b5" /></FakeSelect></FormRow>
                <FormRow><FormLabel>序号选项:</FormLabel><FakeSelect><span /><Chevron /></FakeSelect></FormRow>
              </OptionsBox>
            </RulePane>
          </Lower>
        </Content>
      </Body>

      <StatusBar>
        <StatusCell $w={576}><span>清单库:</span><span>工程量清单项目计量规范(2013-山西)</span></StatusCell>
        <StatusCell $w={576}><span>定额库:</span><span>山西省建筑及装饰工程预算定额(2011)</span></StatusCell>
        <StatusCell $w={295}><span>定额专业:</span><span>建筑工程</span></StatusCell>
        <StatusCell $w={226}><span>当前分部:</span><span>地下</span></StatusCell>
        <StatusCell $w={235}><span>计税模式:</span><span>增值税(一般计税方法)</span></StatusCell>
      </StatusBar>

      <Taskbar>
        <StartBtn><WinLogo /></StartBtn>
        <SearchBox>
          <Ring /><SearchText>在这里输入你要搜索的内容</SearchText><MicSlot><Mic /></MicSlot>
        </SearchBox>
        <TaskSlot $w={60}><TaskView /></TaskSlot>
        <TaskSlot $w={64}><Swirl /></TaskSlot>
        <TaskSlot $w={62}><Spiral /></TaskSlot>
        <TaskSlot $w={52} $ml={10} $run><Edge /></TaskSlot>
        <TaskSlot $w={51} $ml={10} $run><Folder /></TaskSlot>
        <TaskSlot $w={51} $ml={10} $run><Mi /></TaskSlot>
        <TaskSlot $w={60} $ml={8} $run $active><Notes /></TaskSlot>
        <TaskSlot $w={48} $ml={9} $run><HApp /></TaskSlot>
        <Tray $w={24} $ml={526}><Person /></Tray>
        <Tray $w={24} $ml={21}><UpCar /></Tray>
        <Tray $w={24} $ml={6}><Plus360 /></Tray>
        <Tray $w={24} $ml={6}><Cloud /></Tray>
        <Tray $w={24} $ml={6}><Batt /></Tray>
        <Tray $w={24} $ml={7}><Wifi /></Tray>
        <Tray $w={24} $ml={4}><Vol /></Tray>
        <Tray $w={24} $ml={7}>中</Tray>
        <Clock><span>18:48</span><span>2019/5/27</span></Clock>
        <Tray $w={24} $ml={13}><Bubble /></Tray>
      </Taskbar>

      <Ghost>全屏幕截图(S)</Ghost>
      <RedInk width="1920" height="1080" viewBox="0 0 1920 1080">
        <path d={smoothPath(INK)} fill="none" stroke="#f00a0a" strokeWidth="2.500" strokeLinejoin="round" strokeLinecap="round" />
      </RedInk>

      <Meter>
        <MeterPill />
        <MeterBall>49%</MeterBall>
        <MeterArrow $top={13}><UpSmall /></MeterArrow>
        <MeterRate $top={13}>0.04K/s</MeterRate>
        <MeterArrow $top={31}><DownSmall /></MeterArrow>
        <MeterRate $top={31}>0.04K/s</MeterRate>
        <MeterPlus>+</MeterPlus>
        <MeterDot />
      </Meter>
    </Page>
  );
}
